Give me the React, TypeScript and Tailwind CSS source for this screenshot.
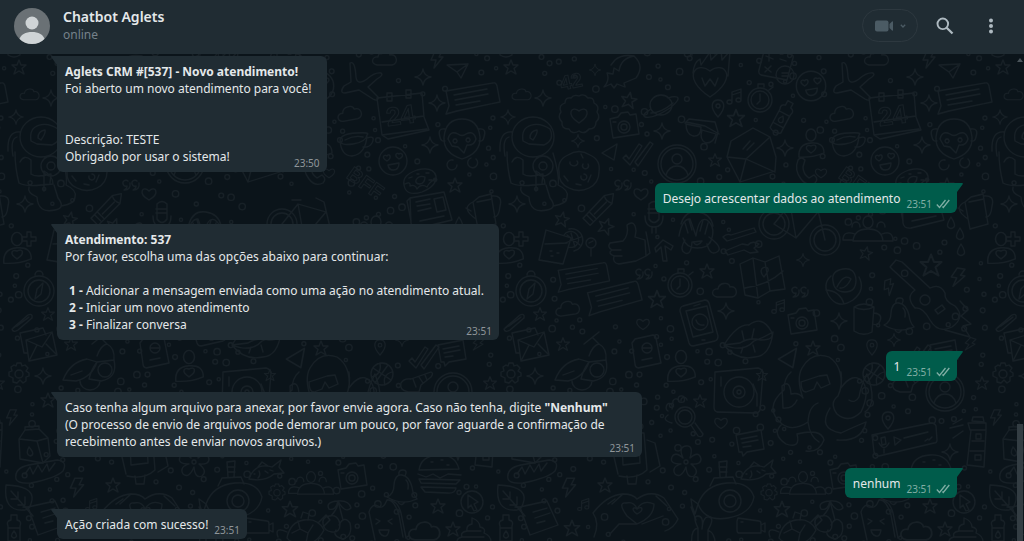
import type { ReactNode } from "react";

type Placed = [kind: string, x: number, y: number, scale?: number, rotate?: number];

const TILE = 492;

/* Line drawings for the wallpaper, each centred on 0,0. */
const shapes: Record<string, string> = {
  star: "M0-7 2-2 7-2 3 1.5 5 7 0 4-5 7-3 1.5-7-2-2-2Z",
  spark: "M0-8Q1-1 8 0Q1 1 0 8Q-1 1-8 0Q-1-1 0-8Z",
  plus: "M-2-7H2V-2H7V2H2V7H-2V2H-7V-2H-2Z",
  cloud: "M-8 6C-15 5-13-3-7-2C-6-9 4-9 5-4C12-6 14 5 7 6Z",
  bolt: "M-2-8H5L2-2H6L-3 9-1 1H-6Z",
  plane: "M-11-5 10-6 3 8-1 2ZM-1 2 10-6",
  heart: "M0 6C-12-1-6-9 0-3C6-9 12-1 0 6Z",
  pin: "M0 9C-10-2-5-8 0-8S10-2 0 9ZM-2-2a2 2 0 1 0 4 0a2 2 0 1 0-4 0",
  drop: "M0-6Q5 2 3 4Q0 7-3 4Q-5 2 0-6Z",
  quote: "M-3-5a3 3 0 1 0-1 5Q-4 3-7 4Q0 4-1-3M6-5a3 3 0 1 0-1 5Q5 3 2 4Q9 4 8-3",
  music: "M-3 5V-5L6-8V3M-3-2 6-5M-3 5a2.5 2 0 1 1-5 0a2.5 2 0 1 1 5 0M6 3a2.5 2 0 1 1-5 0a2.5 2 0 1 1 5 0",
  starfish: "M-11-21Q-6-24-5-7Q-4 2 6-5Q14-12 20-11Q23-9 16-5L7 3 17 13Q18 18 12 15L-2 6-16 9Q-22 9-17 2L-10-2Z",
  calendar: "M-25-17 20-22 22 2 27 15-14 24-20 20ZM-20 20 25 14M-20 7 22 1M-15-22h5v8h-5ZM4-25h5v8h-5Z",
  chat: "M-25-8 22-16Q25-17 26-13L29 3-14 12-25 15-22 7ZM-17-4 16-10M-16 1 17-5M-15 6 9 2",
  chatSmall: "M-14-7 11-12 14 7-3 10-7 14-8 10-11 10ZM-9-3 7-6M-8 1 8-2M-7 5 1 4",
  badge: "M0-19Q5-22 9-17Q15-18 15-12Q21-9 18-3Q22 3 17 7Q17 14 10 14Q5 20 0 16Q-7 20-10 14Q-18 14-17 7Q-22 2-18-3Q-21-10-14-12Q-14-18-8-17Q-5-21 0-19ZM0 8C-14-1-7-10 0-4C7-10 14-1 0 8Z",
  rocket: "M-17 15Q-11 8-14 1L-8 2-7-4-2-1Q0-14 13-16Q24-6 15 6L3 11 4 15-4 12-7 16-10 12ZM13-16Q1-18-6-12L-10-7",
  planet: "M-11 0a11 10 0 1 1 22 0a11 10 0 1 1-22 0M-10 4Q-20 10-16 12Q-8 14 9 3Q20-6 16-8Q13-9 7-7M-10 8Q0 8 12-2",
  camera: "M-14-7-6-9-3-13 4-14 6-11 12-12 15 8-11 12ZM-6 1a6 6 0 1 1 12 0a6 6 0 1 1-12 0M-3 1a3 3 0 1 1 6 0a3 3 0 1 1-6 0M-11-4h3",
  monkey: "M-18-5Q-16-23 0-23T18-5Q19 11 0 17Q-19 11-18-5ZM-17-13Q-25-14-22-5Q-21 0-17-1M17-13Q25-14 22-5Q21 0 17-1M-14-3Q-12-12-4-8Q0-5 4-8Q12-12 14-3Q12 4 5 3L2 11-4 5-10 4ZM-7-3a2 2 0 1 0 .1 0M6-4a2 2 0 1 0 .1 0M-9 18a5 5 0 1 0 4 5M9 16a5 5 0 1 0 5 1",
  astronaut: "M-21 0a21 20 0 1 1 42 0a21 20 0 1 1-42 0M-10 4C-13-14 5-16 17-8Q22 3 11 8L-4 7ZM-3 1Q-3-6 4-7Q5-4 0 3ZM-21-5Q-34-6-33 14M-24 0Q-31 2-28 19M-26 15Q-26 31-22 46Q-14 50 0 48L12 47Q12 39 3 34V54M-21 25Q-17 17-10 23V37Q-5 41 10 37L9 46M-12 50Q-14 56-4 60Q-3 77 14 73Q25 71 17 61L13 48M20 16Q27 40 25 48Q36 53 34 60Q34 67 20 69M0 29a10 10 0 1 0 20 0a10 10 0 1 0-20 0M6 29a4 4 0 1 0 8 0a4 4 0 1 0-8 0",
  smiley: "M-14 0a14 14 0 1 1 28 0a14 14 0 1 1-28 0M-6 0C-13-4-8-7-6-5C-4-8 0-4-6 0M6-2C0-6 4-9 6-7C9-9 12-5 6-2M-5 4 6 2Q6 9 0 9Q-4 9-5 4",
  donut: "M-16 5Q-18-5-3-10Q13-14 16-4Q17 6 2 12Q-14 17-16 5ZM-4 0Q-1-5 5-3Q5 3 0 4Q-5 4-4 0ZM-15 4Q-9 1-10 6Q-5 4-3 9Q1 3 7 7Q10 1 16-1M-8-3-11-2M-3-6h2M6-7h3M9 0h3",
  cookie: "M-20 1Q-22-11-11-16Q0-23 11-16Q22-11 20 1Q20 12 10 17Q0 22-10 17Q-21 12-20 1ZM-9-9a4 3 0 1 0 7-1M4-7a3 3 0 1 0 5 0M-15 5l4 5M2 5a3 3 0 1 0 3-2M12 4l-3 7M-3 13l5 1M2-17l2 4",
  checks: "M-13 6-10 3-7 7 3-8 6-6-6 13ZM-1 10 14-10 17-8 2 14Z",
  wedge: "M-8 1 7-8 4 8Z",
  user: "M-19 0a19 19 0 1 1 38 0a19 19 0 1 1-38 0M-16 0a16 16 0 1 1 32 0a16 16 0 1 1-32 0M-5-5a5 5 0 1 1 10 0a5 5 0 1 1-10 0M-11 11Q-8 2 0 2T11 11",
  news: "M-20-13 14-19 22 9-11 17Q-18 18-19 12ZM-20-13-23-10-19 10M-14-9 0-12M-13-5 0-7M-12 0 1-3M-10 10 14 5M4-12 13-14 16-1 7 1Z",
  pitcher: "M-11-9-5-14 7-17 12 13-6 18ZM-11-9Q-24-3-8 8M-18-3-13 0M8-15Q19-16 16-5 15 6 10 6M-7-9 8-12",
  crayon: "M-20-4 11-5 19 0 11 6-20 6ZM-15-4V6M-11-4V6M11-5Q8 0 11 6M-9 1H8",
  mic: "M-5-12Q0-17 5-12V3Q0 10-5 3ZM-9 0Q-9 11 0 11T9 0M-2 11V17M2 11V17M-6-7H5M-6-3H5",
  flame: "M0 19C-30-1-13-18 0-7C13-18 30-1 0 19ZM-17-5Q-16-16-10-19L-9-13 0-26 1-18 11-28 12-18 20-27 18-2M-8 0-5 8 0 1 5 8 8 0",
  clock: "M-12 1a12 12 0 1 1 24 0a12 12 0 1 1-24 0M-9 1a9 9 0 1 1 18 0a9 9 0 1 1-18 0M0-5V2L-3 5M-2-12V-15H4V-12M9-9l4-3",
  calc: "M-12-19 13-13Q17-12 16-9L10 13-16 8Q-19 7-18 3L-13-16ZM-11-11 -4-8M-8-13V-6M3-8 9-6M-12 0-6 5M-6-1-12 5M-1 8a9 9 0 1 1 18 0a9 9 0 1 1-18 0M5 6H12M5 9H12",
  bottle: "M-6-7Q-8-12-3-13V-18H3V-13Q8-12 6-7V14Q0 18-6 14ZM-6-5H6M-6 8H6M0-2Q5 4 0 5Q-5 4 0-2",
  glasses: "M-18-7-14-11 12-8 15 2 12 13M-17-6Q-17 4-10 6Q-2 7-2-3ZM-1 0Q-4 10 3 13Q11 13 13 4ZM-17-8 2-4 16 4",
  letter: "M-24 2-20-14 2-27 19-18 25 2 24 16-11 27ZM-24 2-5 4 19-18M-5 4 24 17M-5 4-11 27M-8-6-1-14M-4-5 3-12",
  person: "M-5-10a5 6 0 1 1 10 0a5 6 0 1 1-10 0M-12 12Q-13-1 0-2T13 8Q1 13-12 12M0 8C-8 3-4-1 0 1C5-2 8 3 0 8Z",
  phone: "M-9-12Q-6-16-2-12L-4-5Q-4 2 2 6L7 3Q12 7 8 11Q0 15-6 7Q-13-2-9-12Z",
  mobile: "M-17-16 5-22Q8-22 9-19L18 14Q18 18 15 19L-7 24Q-10 24-11 21L-20-11Q-20-15-17-16ZM-14-11 7-16 13 10-7 15ZM-8 0a8 8 0 1 1 16 0a8 8 0 1 1-16 0M-4-2Q-2 4 4 3M-6-16 0-18M2 18h3",
  cup: "M-16-3Q-15-9 0-10T11-8Q10-1-3 1T-16-3ZM-16-3Q-15 13-4 13 10 11 11-8M11-5Q20-8 16 0 13 5 7 4M-11-3Q-2-8 7-6",
  facepalm: "M-16-8Q-12-22 1-20T16-6M-18 4Q-15-13-7-13L-1 4Q2-16 10-12Q20-4 13 11M-14 6Q-11 16 0 16T13 10M-8-12-5-2M-12-9-9 1M6-12 3-1M11-9 8 2M-12 8Q-18 18-12 21T-5 10M10 12Q13 24 20 20T12 5M-4 10Q0 16 5 9Z",
  tools: "M-17-4Q-13-8-9-6L14-13 16-9-6-2-13 0ZM-15 10 2 3 8 4Q12-1 19 3L14 7 18 11 10 12 4 9-12 14Z",
  bike: "M-43 0a15 15 0 1 1 30 0a15 15 0 1 1-30 0M-39 0a11 11 0 1 1 22 0a11 11 0 1 1-22 0M8 16a15 15 0 1 1 30 0a15 15 0 1 1-30 0M12 16a11 11 0 1 1 22 0a11 11 0 1 1-22 0M-28 0-12-20 16-12-6 14-28 0M-12-20-6 14M23 16 14-22 6-26M-18-24h9",
  group: "M-5-11a5 6 0 1 1 10 0a5 6 0 1 1-10 0M-15 8Q-14-4 0-4T15 8ZM-16-6a4 5 0 1 1 8 0M-13 1Q-25-3-25 7H-16M9-6a4 5 0 1 1 8 0M14 1Q25-3 25 8H16",
  map: "M-22-11-9-17 3-13 17-19 23 14 8 16-4 23-17 20ZM-9-17-4 23M3-13 8 16M-17 13Q6 10 21-4M2 2C-7-8 8-11 6-4Z",
  rose: "M-10-3Q-12-13 0-15T13-4Q13 8 2 8T-10-3ZM-12-8Q-21 0-14 12Q-5 26 10 16Q23 6 16-7M-6 3Q1-11 8-5 3 5-3 4M-17 6Q-3 7 1 20",
  guitar: "M-35-29-29-36-23-34 5-8Q15-13 20-3 19 5 30 10Q41 21 27 31Q13 38 5 24-2 11-10 12-20 1-10-6L-32-26ZM-5 4a5 5 0 1 0 10 0a5 5 0 1 0-10 0M10 14l7-5 3 4-7 5ZM20 34 45 41 38 30 46 28 36 20 43 14 35 5",
  lips: "M-25 12Q-12-9 0-8Q13-18 22-2Q27 7 12 7Q0 4-9 10ZM-25 12Q-6 20 5 8 14 5 24-1 21 23 6 24-13 28-25 12ZM-7-2l2 9M5-4 3 5M-6 14l-2 6M4 12l2 7",
  mug: "M-10-12Q0-18 10-12L8 13Q-1 18-10 12ZM-10-12Q0-7 10-12M10-6Q19-5 16 2 14 7 9 5",
  bell: "M-14 10Q-7 7-7-2Q-6-13 1-12T11 0Q12 8 16 12Q1 19-14 10ZM-2-12Q-3-17 2-17T4-11M-3 15Q0 20 4 15M5-7Q8-4 7 2",
  compass: "M-15 2a15 15 0 1 1 30 0a15 15 0 1 1-30 0M-11 2a11 11 0 1 1 22 0a11 11 0 1 1-22 0M-4-14a4 4 0 1 1 8 0M4-6 2 5-4 10-2 0Z",
  clip: "M-10 6 5-7Q10-9 9-4L-5 8Q-10 11-11 7L6-5M-6 4 5-4",
  mail: "M-15-12 8-17 11-10M-15-12-11 8-8 8M-9-5 17-13 22 10-6 16ZM-9-5 7 2 17-13M-6 16 2 0M22 10 11-1",
  drink: "M-10-20 15-12 7 14-17 10ZM-11-6 11-7M-6 1h2M1 3h2M-5 6h2M13-21a11 11 0 1 1 5 22M8-15a8 8 0 1 1 4 12M15-17 19-3M9-7 25-13M11-15 24-5",
  thumb: "M-17-2-4-4Q2-10 0-20 8-26 9-14L8-8 18-5 19 11 9 16-8 19Q-15 18-13 11-20 8-15 5-20 2-17-2ZM-15 5H-6M-13 11H-5M19-13 23 8 19 11",
  arrow: "M-9-4-1-12 9-6 7-2 1-6 3 9-1 9-3-5-8 0Z",
  lolly: "M-5-4a5 5 0 1 1 10 0a5 5 0 1 1-10 0M0 1V9M-2-4 2-6",
  beetle: "M-30 12Q-23-6-6-9L4-6Q-1 9-17 13ZM-22 7-11 3M4-12Q8-23 14-24L8-30M4-6 21-8Q25 10 8 13L-4 11Q-2 2 4-6M5 2a7 7 0 1 1 14 0a7 7 0 1 1-14 0M-13 13a10 9 0 0 0 20 0M14-24Q22-20 21-8M-1-24 14-36",
  gear: "M-2-10H2L3-7 6-8 9-5 7-2 10 0V3L7 4 7 8 4 10 1 7-2 10-6 9-6 5-10 3-10-1-7-2-8-6-5-8-3-7ZM-4 1a4 4 0 1 1 8 0a4 4 0 1 1-8 0",
  passport: "M-12-13 6-17Q8-17 9-14L14 11-9 16Q-12 15-12 12L-15-9ZM-5-4a5 5 0 1 1 10 0a5 5 0 1 1-10 0M-4-4H4M-5 8 5 6",
  ball: "M-11 0a11 11 0 1 1 22 0a11 11 0 1 1-22 0M-9-6 9 6M-7 9 6-9M-10 3Q0 0-2-11M10-2Q0 1 3 11",
  whistle: "M-17 3Q-14-2-7-1L13-8Q16-7 13-3L3 5 1 12-10 12Q-19 10-17 3ZM-5-1-2 7M1-3 5 3M7-5 9 0",
  record: "M-24-20 19-24Q23-23 24-19L21 18Q20 21 16 21L-22 20Q-25 19-25 15ZM-15 0a15 15 0 1 1 30 0a15 15 0 1 1-30 0M-6 0a6 6 0 1 1 12 0a6 6 0 1 1-12 0M-2 0a2 2 0 1 1 4 0a2 2 0 1 1-4 0M14-8 18 2V14M-18-15V-6",
  magnify: "M-10 0a10 10 0 1 1 20 0a10 10 0 1 1-20 0M-7 0a7 7 0 1 1 14 0a7 7 0 1 1-14 0M6 8 13 19Q17 21 18 17L10 6M-17-6a3 4 0 1 1 4-2M-12-14a3 3 0 1 1 6-2M-4-16a3 3 0 1 1 6-1M-17-2Q-24 3-13 6",
  flower: "M-3-4Q-8-15 0-16T4-4Q13-12 15-3 15 3 5 2 14 9 8 14 1 17 0 5-5 17-11 12-15 5-5 2-17 2-14-5-11-11-3-4ZM-2 0a2 2 0 1 1 4 0a2 2 0 1 1-4 0",
  fish: "M-16 8Q-10-9 7-4L16-11 14-4 19 2 9 3Q0 11-16 8ZM-7-4-3-9 3-5M-11 3h1M-6 0Q-4 4-7 7M0 0l3 2M5-1l3 1",
  sub: "M-25 5Q-18-14 4-16T31-2Q28 15 5 19T-25 5ZM-13-13-9-21 10-22 13-15M-3-22-4-37 4-38 3-22M-4-32H4M-3-27H4M-4 2a11 11 0 1 1 22 0a11 11 0 1 1-22 0M1 2a6 6 0 1 1 12 0a6 6 0 1 1-12 0M-25 5-32 0-31 7-28 15-25 5M-32 8-27 21",
  octopus: "M-17-4Q-24-23-18-34-8-51 9-45 23-36 21-14 33-31 43-20 50-9 41 10 29 22 17 12 9 1 18-6 23-17 21-30M-17-4Q-21-10-29-8-30-23-38-16L-37 6Q-27 7-23-2M-29-30Q-36-24-36-12-57 6-38 22-27 30-12 20-11 4-2 1M29-2Q35 2 39-5 41-17 47-28 58 1 45 10M-12 20Q-10 35-1 40M10 6Q-3 27 21 31 36 24 46 20 42 40 17 38M-38 22Q-49 32-34 42-19 47-23 32 1 26 4 38-1 51-14 49M-19-20-1-26 7-27 10-18 1-14-3-20-6-13-14-10Q-19-10-19-20",
  voice: "M-31-6 28-18Q32-18 33-15L34-1Q34 2 31 2L-24 15Q-28 15-29 11ZM-22-3-18-4-17 3-21 4ZM-24 2Q-19 11-14 2M-19 8V12M-8 4-9-4-2-1ZM1-3 25-9M22 0l3-2M26-1l3-3",
  lighthouse: "M-5-20-4-24 6-24 7-19ZM-9-18H9V-11H-7ZM-6-11-10 24 7 26 9-10M-5 0H7M-7 10H7M-1-7H4V-2H-1ZM-2 14H4V19H-2ZM-15-22-24-17M-14-16-27-13M-14-10-24-3",
  burger: "M-20-4Q-18-18-1-19T20-5ZM-21 0-13 3-6 0 1 4 9 0 22 1M-20 5 21 6 17 10-18 9ZM-18 13 17 14Q16 20 8 19L-14 18ZM-8-12h2M2-14h2M8-9h2",
  milk: "M-14-6-8-15 6-16 15-7 17 11 10 18-13 14ZM-14-6 4-4 15-7M4-4 10 18M-8-15-8-18 6-19 6-16M-4 2Q3 10-3 11-8 9-4 2",
  cherry: "M-10-4Q-17-3-16 4T-7 12 1 4Q-1-6-10-4ZM0 5Q5-5 11 3 14 16 4 19-7 16-3 10M-8-4Q0-13-1-19 10-20 12-12 6-6-1-19M-1-19Q-14-18-10-11-3-9-1-19M4 0-1-19",
  cam: "M-13-8 8-5Q10-5 10-2V7L-12 7Q-14 7-14 4V-5ZM10-1 14-3V6L10 4M-10-4h2",
  turtle: "M-18 8Q-15-8-1-10T19 0Q11 15-2 14T-18 8ZM-7-9-5-1-13 3M-5-1 3 3 8-5M3 3 1 13M13-7 21-15 25-10 18-3M-18 2Q-31-4-27 7M-4-12-2-18 4-16 3-10",
  rabbit: "M-5 13V-4Q-11-16-5-16T-1-3Q0-16 6-15T5-2V13M-11 15Q-13-3-5-4M5-2Q13 2 12 14",
  ice: "M-9 17-15-11Q-12-20-6-17-1-13 3-23 10-24 15-8L19 14M3-23Q13-24 17-10L22 15M-8-4-4-2-8 1M8-4 4-2 8 1M-5 7H5Q4 14 0 13T-5 7Z",
  cursor: "M-11 0a11 11 0 1 1 22 0a11 11 0 1 1-22 0M-4-7 6 0 2 2 5 8 2 9-1 3-4 6Z",
  leaf: "M-14-15Q14-14 12 0 10 11 3 10-17 11-14-15ZM-9-9 13 16M-2-8V-1H-9M5-3V5H-2",
  poop: "M-18 12Q-19 6-13 5-15 0-8-1-9-7-3-8L-3-14Q5-11 5-5 11-4 9 1 17 4 16 12M-8-1H6M-13 5H9",
  note: "M-20-10 7-16 18 8-10 18ZM-7-5 7-9M-5 1 10-4M-3 6 5 4M-25-10-20-10",
  bread: "M-24 7Q-26-4-11-7L17-12Q28-11 23-1 16 6-9 11-22 12-24 7ZM-15 2-10-5-7 2-2-7 2 0 7-8 9-1 15-9",
  hands: "M-43 26Q-37 12-44 2-30-16-14-17Q-4-17 0-12 14-22 27-13L41 8Q37 17 28 20M-14-17-25-7M-10 5Q-20-9-11-8-3-10 0-2 6-12 17-7 17 6 0 13L-10 5M0 13-18 13-27 23M5 13 26 5M-29-7-22-12M19-15 30-5M0 3C-7-2-3-5 0-2 5-6 8-1 0 3Z",
  bag: "M-20-12Q-8-25 13-23L16 14Q5 24-12 20M-20-12-13 18M-9-10-8 9 9 7 8-12ZM16-16 24-13 29 10 19 16M-4 20-3 28H5L6 19",
};

const doodles: Placed[] = [
  ["cloud", 385, 59], ["bolt", 437, 59], ["plane", 458, 70], ["star", 511, 67], ["spark", 423, 77], ["starfish", 361, 84],
  ["cup", 356, 143], ["cloud", 350, 114, 1, -10], ["calendar", 402, 115], ["chat", 471, 99], ["cloud", 522, 95, 0.8], ["spark", 437, 103],
  ["spark", 543, 98], ["spark", 595, 70, 0.7], ["rocket", 621, 72], ["badge", 579, 115], ["star", 629, 100, 1.1, 10], ["planet", 661, 105],
  ["camera", 624, 126], ["spark", 662, 131], ["monkey", 462, 142], ["spark", 508, 117, 0.9], ["astronaut", 533, 137], ["spark", 430, 145],
  ["smiley", 393, 161], ["donut", 420, 180], ["cookie", 579, 171], ["spark", 578, 141, 0.8], ["checks", 636, 152], ["wedge", 610, 152],
  ["user", 677, 164], ["star", 455, 185], ["news", 430, 211], ["pitcher", 484, 211], ["spark", 517, 204], ["star", 562, 219, 1, 12],
  ["crayon", 600, 207, 1, -45], ["quote", 623, 186], ["heart", 641, 194], ["star", 606, 226, 1.1, 20], ["mic", 654, 216], ["flame", 710, 78],
  ["clock", 760, 99], ["calc", 777, 67], ["smiley", 811, 86, 1.05], ["music", 735, 97], ["pin", 718, 108], ["star", 736, 118, 1.2],
  ["bottle", 782, 118, 1, 28], ["glasses", 703, 130], ["letter", 751, 155], ["spark", 785, 148], ["person", 811, 145], ["phone", 807, 172],
  ["heart", 821, 173, 0.8], ["star", 715, 160, 0.9], ["facepalm", 697, 232], ["tools", 740, 241], ["bike", 802, 224], ["group", 868, 233],
  ["drop", 951, 223], ["drop", 960, 234], ["drop", 961, 250], ["person", 1001, 250, 1.1], ["plus", 1013, 239], ["star", 931, 265, 1.5],
  ["spark", 803, 260, 0.8], ["star", 866, 253, 0.9, 12], ["map", 762, 275], ["clock", 680, 284], ["star", 707, 271], ["cloud", 725, 291],
  ["star", 657, 299, 1.2], ["quote", 644, 275], ["quote", 800, 293], ["rose", 843, 284], ["guitar", 925, 296], ["bolt", 958, 277, 1.1, 10],
  ["bolt", 889, 287, 0.9, -20], ["mobile", 700, 322], ["spark", 726, 311], ["lips", 749, 333], ["music", 779, 307, 0.9], ["camera", 802, 322],
  ["spark", 839, 321], ["mug", 864, 319], ["bell", 898, 315], ["spark", 894, 340, 0.8], ["star", 813, 348], ["pin", 872, 347, 0.9],
  ["checks", 914, 355], ["chatSmall", 944, 352], ["bolt", 970, 344, 0.8, 20], ["compass", 1023, 289], ["clip", 1007, 322], ["mail", 1019, 345],
  ["drink", 556, 250], ["thumb", 627, 245], ["arrow", 664, 252], ["lolly", 591, 247], ["chat", 582, 278, 0.95], ["chat", 613, 299, 1, -4],
  ["cloud", 568, 309, 1, -8], ["star", 540, 314, 0.9], ["heart", 643, 324, 0.9], ["beetle", 585, 368], ["star", 563, 344, 0.9], ["gear", 511, 373],
  ["spark", 535, 376], ["passport", 647, 352], ["person", 681, 368, 1.1], ["ball", 382, 374], ["whistle", 418, 380], ["user", 453, 392],
  ["star", 490, 383, 0.9], ["star", 700, 401, 0.9], ["record", 739, 392], ["magnify", 685, 417], ["heart", 721, 423, 0.9], ["flower", 686, 462],
  ["chatSmall", 750, 442], ["fish", 757, 471], ["sub", 723, 499], ["octopus", 820, 402], ["wedge", 788, 358, 1.2], ["star", 762, 375, 0.8],
  ["pin", 888, 420], ["voice", 903, 441], ["lighthouse", 977, 441], ["spark", 950, 452], ["burger", 931, 474], ["milk", 1017, 445],
  ["group", 803, 487, 0.9], ["gear", 769, 492, 0.8], ["star", 782, 509, 1.1], ["camera", 844, 477], ["cherry", 831, 520], ["cam", 751, 526],
  ["turtle", 797, 530], ["rabbit", 703, 532], ["bell", 893, 487], ["ice", 876, 523], ["cloud", 917, 532, 1.3], ["star", 930, 506],
  ["cursor", 964, 502], ["leaf", 1004, 500], ["poop", 967, 532], ["star", 945, 529], ["bottle", 998, 533], ["bread", 532, 472],
  ["bolt", 569, 487, 1.1], ["star", 605, 485], ["note", 540, 517], ["music", 584, 505, 0.8], ["hands", 637, 511], ["bag", 631, 456],
  ["star", 572, 528, 1.1], ["star", 540, 400], ["bolt", 504, 417, 0.9], ["cloud", 575, 410], ["mug", 600, 420],
];

/* Loose rings fill the gaps between the drawings. */
const rings = (() => {
  const out: { x: number; y: number; r: number }[] = [];
  let seed = 71;
  const next = () => {
    seed = (seed * 16807) % 2147483647;
    return seed / 2147483647;
  };
  const wide = /calendar|chat$|monkey|badge|rocket|letter|mobile|lips|record|sub|burger|voice|beetle|map|hands|bag|cookie|user|flame|facepalm|guitar|news|starfish|lighthouse|thumb|drink|rose/;
  for (let i = 0; i < 6000 && out.length < 330; i += 1) {
    const x = 340 + next() * TILE;
    const y = 54 + next() * TILE;
    const r = [1.6, 2, 2.4, 3.2][Math.floor(next() * 4)];
    const free = doodles.every(([kind, dx, dy]) => {
      const reach = kind === "octopus" || kind === "astronaut" || kind === "bike" ? 42 : wide.test(kind) ? 25 : 13;
      const gap = Math.abs(x - dx) % TILE;
      return Math.hypot(Math.min(gap, TILE - gap), y - dy) > reach + r;
    });
    if (free && out.every((o) => Math.hypot(o.x - x, o.y - y) > 9)) out.push({ x, y, r });
  }
  return out;
})();

function Wallpaper() {
  return (
    <svg className="absolute inset-0 h-full w-full" aria-hidden="true">
      <defs>
        <g id="doodles" fill="none" stroke="#172026" strokeWidth="1.3" strokeLinecap="round" strokeLinejoin="round">
          {doodles.map(([kind, x, y, scale = 1, rotate = 0], i) => (
            <path key={i} d={shapes[kind]} transform={`translate(${x} ${y}) rotate(${rotate}) scale(${scale})`} />
          ))}
          {rings.map((o, i) => (
            <circle key={i} cx={o.x} cy={o.y} r={o.r} />
          ))}
          <g fontFamily="'Liberation Sans', sans-serif" fontWeight="700" strokeWidth="1">
            <text x="386" y="124" fontSize="26" transform="rotate(-8 402 115)">24</text>
            <text x="560" y="88" fontSize="20" transform="rotate(-12 573 81)">42</text>
            <text x="346" y="180" fontSize="20" transform="rotate(35 350 178)">BFF</text>
          </g>
        </g>
        <pattern id="wall" width={TILE} height={TILE} patternUnits="userSpaceOnUse">
          {[-2, -1, 0].map((col) =>
            [-1, 0].map((row) => <use key={`${col}${row}`} href="#doodles" x={col * TILE} y={row * TILE - 54} />),
          )}
        </pattern>
      </defs>
      <rect width="100%" height="100%" fill="url(#wall)" />
    </svg>
  );
}

function Tail({ outgoing }: { outgoing?: boolean }) {
  return outgoing ? (
    <svg className="absolute top-0 -right-1.5 h-3 w-3 text-[#005c4b]" viewBox="0 0 12 12" aria-hidden="true">
      <path d="M0 0H11Q12.500 0 11.500 1.500L6 9V12H0Z" fill="currentColor" />
    </svg>
  ) : (
    <svg className="absolute top-0 -left-1.5 h-3 w-3 text-[#202c33]" viewBox="0 0 12 12" aria-hidden="true">
      <path d="M12 0H1Q-.5 0 .5 1.500L6 9V12H12Z" fill="currentColor" />
    </svg>
  );
}

function Checks() {
  return (
    <svg className="h-3 w-3.5" viewBox="0 0 14 12" fill="none" stroke="currentColor" strokeWidth="1.3" aria-label="Entregue" role="img">
      <path d="M.8 6.500 3.500 9.500 9.500 2M6.500 8.500 7.300 9.500 13.300 2" />
    </svg>
  );
}

function Bubble({ time, outgoing, short, children }: { time: string; outgoing?: boolean; short?: boolean; children: ReactNode }) {
  const side = outgoing ? "self-end bg-[#005c4b]" : "self-start bg-[#202c33]";
  const shape = short ? "flex items-end gap-1.5 pt-[7px] pb-1.5 pr-[7px]" : "grid py-[7px] pr-[7px]";
  return (
    <article className={`relative max-w-[65%] rounded-md pl-2 ${side} ${shape}`}>
      <Tail outgoing={outgoing} />
      <div className={short ? "" : "col-start-1 row-start-1 pr-2"}>{children}</div>
      <div
        className={`flex h-3 items-center gap-1 text-[10px] leading-3 ${outgoing ? "text-[#80aea5]" : "text-[#8f969a]"} ${
          short ? "-mb-[3px]" : "col-start-1 row-start-1 -mb-1 self-end justify-self-end"
        }`}
      >
        <time>{time}</time>
        {outgoing && <Checks />}
      </div>
    </article>
  );
}

export default function App() {
  return (
    <div className="flex h-screen flex-col overflow-hidden bg-[#0b141a] font-['Noto_Sans','Open_Sans',sans-serif] text-[#e4e8ea]">
      <header className="flex h-[54px] shrink-0 items-center bg-[#202c33] pr-[22px] pb-[3px] pl-3.5">
        <svg className="size-9 shrink-0" viewBox="0 0 36 36" role="img" aria-label="Foto do contato">
          <defs>
            <clipPath id="disc">
              <circle cx="18" cy="18" r="18" />
            </clipPath>
          </defs>
          <g clipPath="url(#disc)">
            <rect width="36" height="36" fill="#6a7175" />
            <circle cx="18" cy="15" r="6.500" fill="#cfd4d6" />
            <path d="M5 33C6 26 12 24 18 24S30 26 31 33L25 36H11Z" fill="#cfd4d6" />
          </g>
        </svg>
        <div className="min-w-0 flex-1 pl-[13px]">
          <h1 className="text-[14px] leading-[18px] font-semibold">Chatbot Aglets</h1>
          <p className="text-[12px] leading-[17px] text-[#75818a]">online</p>
        </div>
        <button type="button" aria-label="Chamada de vídeo" className="flex h-[33px] w-14 items-center justify-between rounded-full border border-[#2d383f] pr-2.5 pl-3">
          <svg className="h-3 w-[19px] text-[#4b5b64]" viewBox="0 0 19 12" fill="currentColor" aria-hidden="true">
            <rect x="0" y="0.500" width="13.500" height="11" rx="2" />
            <path d="M14.500 4 17 1.500Q18 1 18 2V10Q18 11 17 10.500L14.500 8Z" />
          </svg>
          <svg className="h-1.5 w-2 text-[#4b5b64]" viewBox="0 0 8 6" fill="none" stroke="currentColor" strokeWidth="1.300" aria-hidden="true">
            <path d="M1.800 1.800 4 4 6.200 1.800" />
          </svg>
        </button>
        <button type="button" aria-label="Pesquisar" className="ml-4 flex size-[22px] items-center justify-center text-[#aebac1]">
          <svg className="size-[18px]" viewBox="0 0 18 18" fill="none" stroke="currentColor" aria-hidden="true">
            <circle cx="6.800" cy="6.800" r="5.300" strokeWidth="1.900" />
            <path d="M10.700 10.700 16.500 16.500" strokeWidth="2.300" />
          </svg>
        </button>
        <button type="button" aria-label="Mais opções" className="ml-6 flex size-[22px] items-center justify-center text-[#aebac1]">
          <svg className="h-4 w-1" viewBox="0 0 4 16" fill="currentColor" aria-hidden="true">
            <circle cx="2" cy="2.500" r="2" />
            <circle cx="2" cy="8" r="2" />
            <circle cx="2" cy="13.500" r="2" />
          </svg>
        </button>
      </header>

      <main className="relative flex-1 overflow-hidden">
        <Wallpaper />
        <div className="relative flex flex-col gap-[11px] pt-0.5 pr-[67px] pl-[57px] text-[12px] leading-[17px]">
          <Bubble time="23:50">
            <p className="font-bold">Aglets CRM #[537] - Novo atendimento!</p>
            <p>Foi aberto um novo atendimento para você!</p>
            <p className="pt-[34px]">Descrição: TESTE</p>
            <p>Obrigado por usar o sistema!</p>
          </Bubble>
          <Bubble time="23:51" outgoing short>
            Desejo acrescentar dados ao atendimento
          </Bubble>
          <Bubble time="23:51">
            <p className="font-bold">Atendimento: 537</p>
            <p>Por favor, escolha uma das opções abaixo para continuar:</p>
            <p className="pt-[17px] pl-1">
              <b>1 -</b> Adicionar a mensagem enviada como uma ação no atendimento atual.
            </p>
            <p className="pl-1">
              <b>2 -</b> Iniciar um novo atendimento
            </p>
            <p className="pl-1">
              <b>3 -</b> Finalizar conversa
            </p>
          </Bubble>
          <Bubble time="23:51" outgoing short>
            1
          </Bubble>
          <Bubble time="23:51">
            <p>
              Caso tenha algum arquivo para anexar, por favor envie agora. Caso não tenha, digite <b>"Nenhum"</b>
            </p>
            <p>
              (O processo de envio de arquivos pode demorar um pouco, por favor aguarde a confirmação de recebimento antes de enviar novos
              arquivos.)
            </p>
          </Bubble>
          <Bubble time="23:51" outgoing short>
            nenhum
          </Bubble>
          <Bubble time="23:51" short>
            Ação criada com sucesso!
          </Bubble>
        </div>
        <div className="absolute inset-y-0 right-0 flex w-2 flex-col items-center justify-between" aria-hidden="true">
          <svg className="mt-1 h-1 w-1.5 text-[#4a545a]" viewBox="0 0 6 4" fill="currentColor">
            <path d="M3 0 6 4H0Z" />
          </svg>
          <div className="h-[24%] w-1.5 bg-[#333d43]" />
        </div>
      </main>
    </div>
  );
}
